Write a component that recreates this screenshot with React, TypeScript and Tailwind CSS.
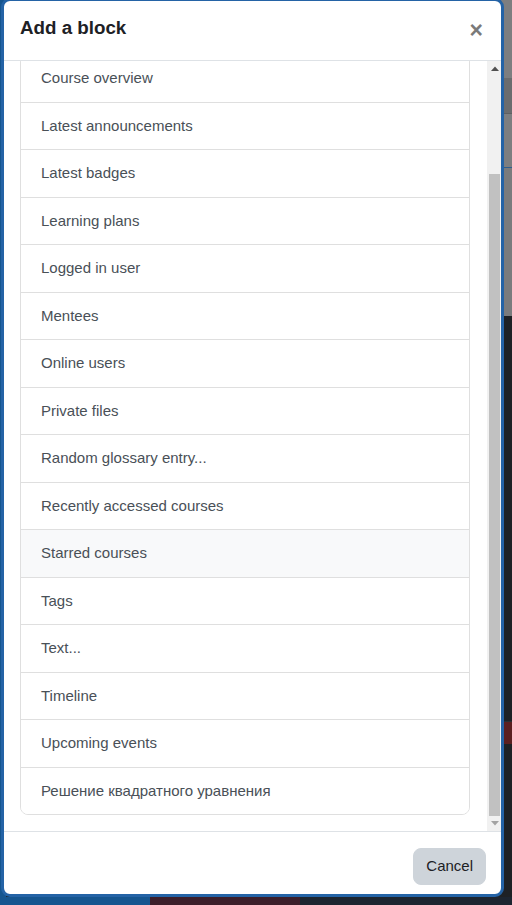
const blocks = [
  "Course overview",
  "Latest announcements",
  "Latest badges",
  "Learning plans",
  "Logged in user",
  "Mentees",
  "Online users",
  "Private files",
  "Random glossary entry...",
  "Recently accessed courses",
  "Starred courses",
  "Tags",
  "Text...",
  "Timeline",
  "Upcoming events",
  "Решение квадратного уравнения",
];

function Arrow({ up, color }: { up?: boolean; color: string }) {
  return (
    <svg width="8" height="5" viewBox="0 0 8 5">
      <polygon points={up ? "0,5 4,0.5 8,5" : "0,0 4,4.5 8,0"} fill={color} />
    </svg>
  );
}

export default function App() {
  return (
    <div
      className="relative w-[512px] h-[905px] overflow-hidden bg-[#1d2024]"
      style={{ fontFamily: '"Liberation Sans", Arial, sans-serif' }}
    >
      {/* dimmed page behind the modal */}
      <div className="flex flex-col h-full">
        <div className="flex flex-1">
          <div className="w-[6px] bg-[#15558f]" />
          <div className="flex-1 flex flex-col">
            <div className="h-[78px] bg-[#7d7e80]" />
            <div className="h-[36px] bg-[#6b6c6e] border-b border-[#5f6062]" />
            <div className="h-[54px] bg-[#7d7e80] border-b border-[#2f5e8e]" />
            <div className="h-[148px] bg-[#7a7b7d]" />
            <div className="flex-1 flex flex-col bg-[#1e2125]">
              <div className="h-[406px] border-b border-[#2b2f33]" />
              <div className="h-[22px] bg-[#5b1f20]" />
              <div className="flex-1" />
            </div>
          </div>
        </div>
        <div className="h-[8px] flex">
          <div className="w-[150px] bg-[#15558f]" />
          <div className="w-[150px] bg-[#3c1e2a]" />
          <div className="flex-1 bg-[#1d2530]" />
        </div>
      </div>

      {/* modal */}
      <div className="absolute left-[1px] top-[-2px] w-[503px] h-[899px] border-[3px] border-[#2463a6] rounded-[9px] bg-white flex flex-col overflow-hidden">
        <div className="h-[60px] shrink-0 flex items-start justify-between px-4 pt-4 border-b border-[#dee2e6]">
          <h5 className="text-[18.75px] leading-[1.2] font-bold text-[#1d2125]">
            Add a block
          </h5>
          <button
            aria-label="Close"
            className="text-[23px] leading-none font-bold text-[#7a7a7a] mt-[2px] mr-[2px]"
          >
            ×
          </button>
        </div>

        <div className="flex-1 flex min-h-0">
          <div className="flex-1 overflow-hidden px-4 pb-4">
            <div className="-mt-[7px] border border-[#dfdfdf] rounded-lg overflow-hidden divide-y divide-[#dfdfdf]">
              {blocks.map((name) => (
                <div
                  key={name}
                  className={
                    name === "Starred courses"
                      ? "px-5 py-3 text-[15px] leading-[1.5] text-[#495057] bg-[#f8f9fa]"
                      : "px-5 py-3 text-[15px] leading-[1.5] text-[#495057] bg-white"
                  }
                >
                  {name}
                </div>
              ))}
            </div>
          </div>

          {/* scrollbar */}
          <div className="w-[15px] shrink-0 flex flex-col bg-[#f1f1f1] border-l border-white">
            <div className="h-[15px] flex items-center justify-center pl-[1px]">
              <Arrow up color="#505050" />
            </div>
            <div className="flex-1" />
            <div className="h-[642px] ml-[2px] w-[11px] bg-[#c1c1c1]" />
            <div className="h-[15px] flex items-center justify-center pl-[1px]">
              <Arrow color="#a3a3a3" />
            </div>
          </div>
        </div>

        <div className="h-[63px] shrink-0 flex justify-end items-start border-t border-[#dee2e6] pt-4 pr-[15px]">
          <button className="px-3 py-1.5 text-[15px] leading-[1.5] text-[#1d2125] bg-[#ced4da] border border-[#ced4da] rounded-lg">
            Cancel
          </button>
        </div>
      </div>
    </div>
  );
}
